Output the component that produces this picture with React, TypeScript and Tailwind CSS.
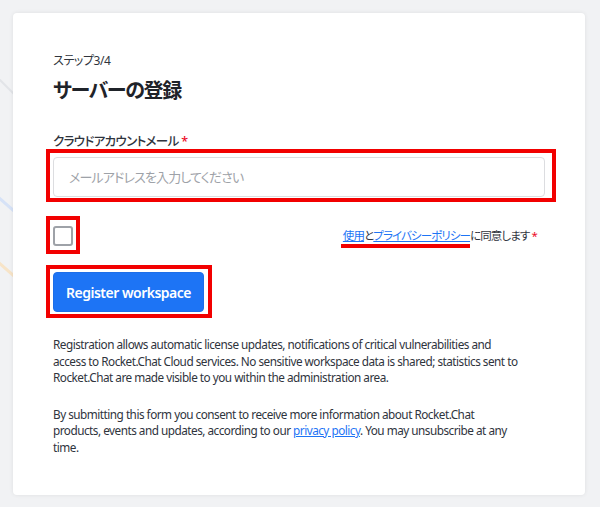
import React from "react";

const jp = { fontFamily: '"Noto Sans", "Noto Sans CJK JP", sans-serif' };

export default function App() {
  return (
    <div className="relative w-[600px] h-[507px] overflow-hidden bg-[#f1f2f4] pt-[13px] pl-[13px] [font-feature-settings:'palt']" style={jp}>
      <svg className="absolute left-0 top-0" width="600" height="507" viewBox="0 0 600 507">
        <line x1="-20" y1="60" x2="30" y2="110" stroke="#e2e4e8" strokeWidth="2" />
        <line x1="-10" y1="190" x2="30" y2="225" stroke="#d6e2f7" strokeWidth="3" />
        <line x1="-10" y1="255" x2="30" y2="290" stroke="#f7e4c8" strokeWidth="3" />
      </svg>
      <div className="relative w-[572px] h-[482px] bg-white rounded-[4px] shadow-[0_0_4px_rgba(0,0,0,0.08)] px-[40px] pt-[39px] text-[#2f343d]">
        <div className="text-[12px] leading-[18px] tracking-[-0.4px] text-[#2f343d]">ステップ3/4</div>
        <h1 className="mt-[7px] text-[20px] leading-[28px] font-bold tracking-[-1.3px] text-[#1f2329]">サーバーの登録</h1>
        <div className="mt-[28px] text-[12.5px] leading-[18px] font-medium tracking-[-0.65px] text-[#2f343d]">
          クラウドアカウントメール <span className="text-[#ec0d2a]">*</span>
        </div>
        <div className="relative mt-[6px]">
          <input
            className="w-[492px] h-[40px] rounded-[4px] border border-[#dcdde0] px-[15px] text-[13px] tracking-[-0.85px] outline-none placeholder:text-[#9ea2a8] [font-feature-settings:'palt']"
            placeholder="メールアドレスを入力してください"
            style={jp}
          />
          <span className="pointer-events-none absolute left-[-7px] top-[-8px] w-[510px] h-[53px] border-[4px] border-[#f20000]" />
        </div>
        <div className="mt-[29px] flex items-center justify-between">
          <div className="relative">
            <div className="w-[20px] h-[20px] rounded-[3px] border-2 border-[#9ea2a8] bg-white" />
            <span className="pointer-events-none absolute left-[-7px] top-[-10px] w-[34px] h-[38px] border-[4px] border-[#f20000]" />
          </div>
          <div className="mr-[8px] text-[11.5px] leading-[18px] tracking-[-0.9px] text-[#2f343d]">
            <span className="relative">
              <a className="text-[#1d74f5] underline">使用</a>と<a className="text-[#1d74f5] underline">プライバシーポリシー</a>
              <span className="pointer-events-none absolute left-[-2px] right-0 top-[16px] h-[4px] bg-[#f20000]" />
            </span>
            に同意します <span className="text-[#ec0d2a]">*</span>
          </div>
        </div>
        <div className="relative mt-[26px] w-fit">
          <button className="h-[40px] w-[151px] rounded-[4px] bg-[#1d74f5] border border-[#1d6ee8] text-white text-[14px] font-semibold tracking-[-0.5px]" style={jp}>
            Register workspace
          </button>
          <span className="pointer-events-none absolute left-[-7px] top-[-7px] w-[166px] h-[53px] border-[4px] border-[#f20000]" />
        </div>
        <p className="mt-[24px] text-[11.75px] leading-[16.5px] tracking-[-0.5px] text-[#2f343d]">
          Registration allows automatic license updates, notifications of critical vulnerabilities and
          <br />
          access to Rocket.Chat Cloud services. No sensitive workspace data is shared; statistics sent to
          <br />
          Rocket.Chat are made visible to you within the administration area.
        </p>
        <p className="mt-[20px] text-[11.75px] leading-[16.5px] tracking-[-0.5px] text-[#2f343d]">
          By submitting this form you consent to receive more information about Rocket.Chat
          <br />
          products, events and updates, according to our{" "}
          <a className="text-[#1d74f5] underline">privacy policy</a>. You may unsubscribe at any
          <br />
          time.
        </p>
      </div>
    </div>
  );
}
